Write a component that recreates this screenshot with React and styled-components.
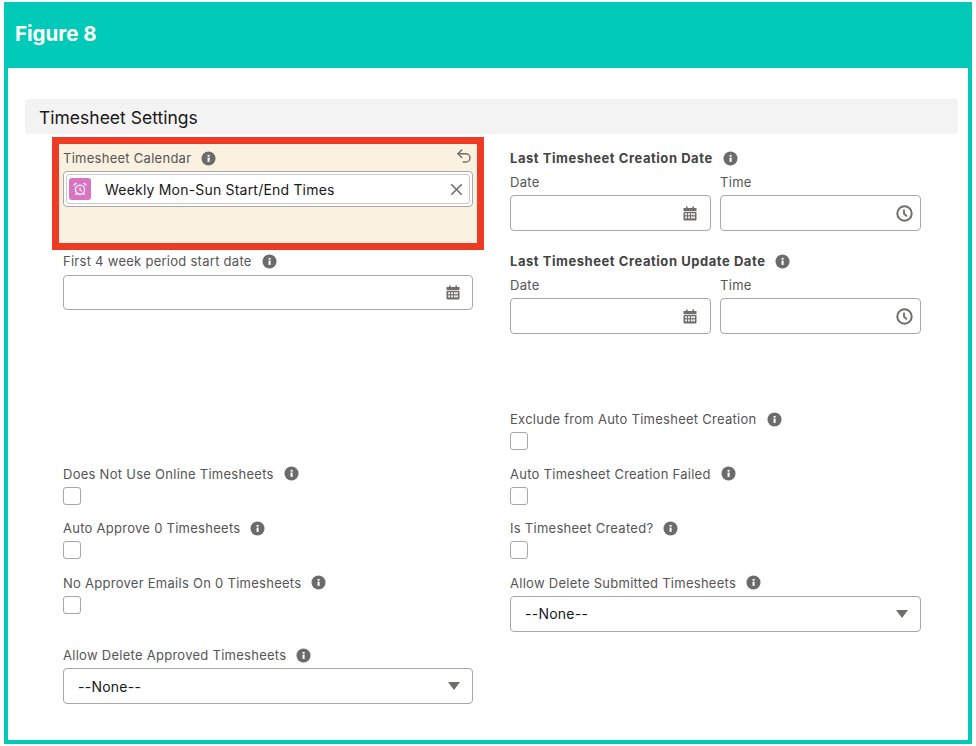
import React from "react";
import styled, { createGlobalStyle } from "styled-components";
import { Undo2, X } from "lucide-react";

const InfoIcon = () => (
  <InfoSvg viewBox="0 0 16 16">
    <circle cx="8" cy="8" r="7.5" fill="#6b6b6b" />
    <rect x="7" y="7" width="2.2" height="4.6" fill="#fff" />
    <rect x="7" y="4.2" width="2.2" height="1.8" fill="#fff" />
  </InfoSvg>
);

const CalendarIcon = () => (
  <IconSvg width="14" height="15" viewBox="0 0 14 15">
    <rect x="3" y="0.5" width="1.6" height="2.5" fill="#706e6b" />
    <rect x="9.4" y="0.5" width="1.6" height="2.5" fill="#706e6b" />
    <rect x="0.5" y="2" width="13" height="3" fill="#706e6b" />
    <rect x="0.5" y="5.8" width="13" height="8.7" rx="1" fill="#706e6b" />
    {[2.2, 5.1, 8, 10.2].map((x) =>
      [7.2, 10.4].map((y) => (
        <rect key={x + "-" + y} x={x} y={y} width="1.7" height="2" fill="#fff" />
      ))
    )}
  </IconSvg>
);

const ClockIcon = () => (
  <IconSvg width="17" height="17" viewBox="0 0 17 17">
    <circle cx="8.5" cy="8.5" r="7.2" fill="none" stroke="#706e6b" strokeWidth="2" />
    <path d="M8 4.6v4.2l3 2.6" fill="none" stroke="#706e6b" strokeWidth="1.8" />
  </IconSvg>
);

const AlarmIcon = () => (
  <svg width="14" height="14" viewBox="0 0 14 14">
    <circle cx="7" cy="7.8" r="4.6" fill="none" stroke="#fff" strokeWidth="1.3" />
    <path d="M7 5.4v2.6l1.8 1.2" fill="none" stroke="#fff" strokeWidth="1.1" />
    <path d="M0.8 3.2 3.2 1M13.2 3.2 10.8 1" fill="none" stroke="#fff" strokeWidth="1.5" />
    <path d="M3.4 11.6 2.4 13M10.6 11.6l1 1.4" fill="none" stroke="#fff" strokeWidth="1.1" />
  </svg>
);

const LabelRow = ({ children, bold }) => (
  <Label $bold={bold}>
    {children}
    <InfoIcon />
  </Label>
);

const CheckField = ({ label, top }) => (
  <Field $top={top}>
    <LabelRow>{label}</LabelRow>
    <Checkbox />
  </Field>
);

const SelectField = ({ label, top }) => (
  <Field $top={top}>
    <LabelRow>{label}</LabelRow>
    <Input $gap={4}>
      <SelectText>--None--</SelectText>
      <Caret />
    </Input>
  </Field>
);

const DateTimeField = ({ label, top }) => (
  <Field $top={top}>
    <LabelRow bold>{label}</LabelRow>
    <DateTimeRow>
      <div>
        <SubLabel>Date</SubLabel>
        <Input $gap={4}>
          <CalendarIcon />
        </Input>
      </div>
      <div>
        <SubLabel>Time</SubLabel>
        <Input $gap={4} $right={7}>
          <ClockIcon />
        </Input>
      </div>
    </DateTimeRow>
  </Field>
);

export default function App() {
  return (
    <>
      <GlobalStyle />
      <Frame>
        <Header>Figure 8</Header>
        <Body>
          <SectionTitle>Timesheet Settings</SectionTitle>
          <Columns>
            <Column>
              <Highlight>
                <HighlightTop>
                  <LabelRow>Timesheet Calendar</LabelRow>
                  <UndoIcon size={18} color="#706e6b" strokeWidth={1.9} />
                </HighlightTop>
                <Lookup>
                  <Pill>
                    <PillIcon>
                      <AlarmIcon />
                    </PillIcon>
                    <PillText>Weekly Mon-Sun Start/End Times</PillText>
                    <X size={19} color="#706e6b" strokeWidth={2} />
                  </Pill>
                </Lookup>
              </Highlight>
              <Field $top={2}>
                <LabelRow>First 4 week period start date</LabelRow>
                <Input $height={35} $right={12}>
                  <CalendarIcon />
                </Input>
              </Field>
              <CheckField label="Does Not Use Online Timesheets" top={154.5} />
              <CheckField label="Auto Approve 0 Timesheets" top={14.5} />
              <CheckField label="No Approver Emails On 0 Timesheets" top={14.5} />
              <SelectField label="Allow Delete Approved Timesheets" top={32.5} />
            </Column>
            <Column>
              <DateTimeField label="Last Timesheet Creation Date" top={15} />
              <DateTimeField label="Last Timesheet Creation Update Date" top={21} />
              <CheckField label="Exclude from Auto Timesheet Creation" top={76} />
              <CheckField label="Auto Timesheet Creation Failed" top={14.5} />
              <CheckField label="Is Timesheet Created?" top={14.5} />
              <SelectField label="Allow Delete Submitted Timesheets" top={14.5} />
            </Column>
          </Columns>
        </Body>
      </Frame>
    </>
  );
}

const GlobalStyle = createGlobalStyle`
  body {
    margin: 0;
    background: #fff;
    font-family: Inter, "Liberation Sans", sans-serif;
  }
`;

const Frame = styled.div`
  box-sizing: border-box;
  width: 968px;
  height: 742px;
  margin: 2px 0 0 4px;
  border: 4px solid #01cbb8;
  border-top: 0;
  overflow: hidden;
  background: #fff;
`;
const Header = styled.div`
  height: 66px;
  margin: 0 -4px;
  padding-left: 11px;
  background: #01cbb8;
  color: #fff;
  font-size: 20.5px;
  font-weight: 700;
  line-height: 64px;
`;
const Body = styled.div`
  padding: 31px 10px 0 17px;
`;
const SectionTitle = styled.div`
  height: 35px;
  padding-left: 14px;
  border-radius: 4px;
  background: #f3f3f3;
  color: #181818;
  font-size: 17.5px;
  line-height: 37px;
`;
const Columns = styled.div`
  display: grid;
  grid-template-columns: 410px 411px;
  column-gap: 37px;
  padding-left: 38px;
`;
const Column = styled.div`
  display: flex;
  flex-direction: column;
`;
const Highlight = styled.div`
  box-sizing: border-box;
  height: 113px;
  margin: 3px -11px 0;
  padding: 5px 4px 0;
  border: 7px solid #ee3b24;
  background: #faf1e0;
`;
const HighlightTop = styled.div`
  display: flex;
  justify-content: space-between;
  height: 22px;
`;
const UndoIcon = styled(Undo2)`
  margin-top: -2px;
`;
const Field = styled.div`
  margin-top: ${(p) => p.$top || 0}px;
`;
const Label = styled.div`
  display: flex;
  align-items: center;
  height: 18px;
  color: ${(p) => (p.$bold ? "#444" : "#555")};
  font-size: 13px;
  font-weight: ${(p) => (p.$bold ? 700 : 400)};
  letter-spacing: ${(p) => (p.$bold ? 0.55 : 0.27)}px;
`;
const InfoSvg = styled.svg`
  width: 15px;
  height: 15px;
  margin-left: 10px;
`;
const IconSvg = styled.svg`
  flex: none;
`;
const SubLabel = styled.div`
  height: 18px;
  margin-top: 6px;
  color: #555;
  font-size: 13px;
  letter-spacing: 0.3px;
  line-height: 18px;
`;
const DateTimeRow = styled.div`
  display: grid;
  grid-template-columns: 201px 201px;
  column-gap: 9px;
`;
const Input = styled.div`
  box-sizing: border-box;
  display: flex;
  align-items: center;
  justify-content: flex-end;
  height: ${(p) => p.$height || 36}px;
  margin-top: ${(p) => p.$gap ?? 5}px;
  padding-right: ${(p) => p.$right || 13}px;
  border: 1px solid #a8a8a8;
  border-radius: 4px;
  background: #fff;
`;
const SelectText = styled.span`
  margin-right: auto;
  padding-left: 14px;
  color: #181818;
  font-size: 14px;
  letter-spacing: 0.25px;
`;
const Caret = styled.span`
  width: 0;
  height: 0;
  margin-right: -1px;
  border-left: 6.5px solid transparent;
  border-right: 6.5px solid transparent;
  border-top: 8px solid #706e6b;
`;
const Checkbox = styled.div`
  box-sizing: border-box;
  width: 18px;
  height: 18px;
  margin-top: 4px;
  border: 1px solid #a8a8a8;
  border-radius: 3px;
  background: #fff;
`;
const Lookup = styled.div`
  box-sizing: border-box;
  height: 36px;
  padding: 2px;
  border: 1px solid #a8a8a8;
  border-radius: 4px;
  background: #fff;
`;
const Pill = styled.div`
  box-sizing: border-box;
  display: flex;
  align-items: center;
  height: 30px;
  padding: 0 3px 0 2px;
  border: 1px solid #c9c9c9;
  border-radius: 3px;
`;
const PillIcon = styled.div`
  display: flex;
  align-items: center;
  justify-content: center;
  width: 22px;
  height: 22px;
  border-radius: 3px;
  background: #d974c2;
`;
const PillText = styled.span`
  flex: 1;
  margin-left: 14px;
  color: #181818;
  font-size: 14px;
  letter-spacing: 0.2px;
`;
